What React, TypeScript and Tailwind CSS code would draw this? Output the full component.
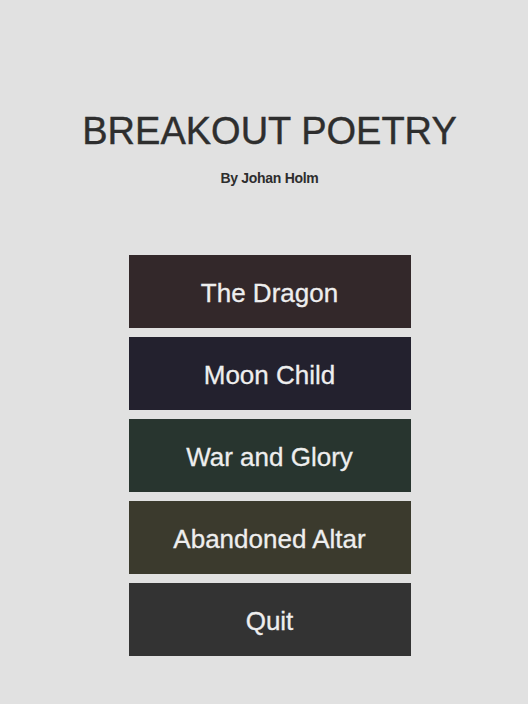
import React from 'react';

const poems = [
  { title: 'The Dragon', bg: 'bg-[#33282a]' },
  { title: 'Moon Child', bg: 'bg-[#23212e]' },
  { title: 'War and Glory', bg: 'bg-[#28352f]' },
  { title: 'Abandoned Altar', bg: 'bg-[#3b3a2d]' },
  { title: 'Quit', bg: 'bg-[#333333]' },
];

export default function App() {
  return (
    <div
      className="min-h-[704px] bg-[#e1e1e1] flex flex-col items-center pt-[112px] pl-[11px]"
      style={{ fontFamily: '"Liberation Sans", Arial, sans-serif' }}
    >
      <h1 className="text-[38px] leading-none text-[#2e2e2e] [-webkit-text-stroke:0.4px_#2e2e2e]">BREAKOUT POETRY</h1>
      <p className="mt-[21px] text-[14px] leading-none font-bold text-[#2d2d2d] tracking-[-0.3px]">By Johan Holm</p>
      <div className="mt-[70px] flex flex-col gap-[9px]">
        {poems.map(p => (
          <button
            key={p.title}
            className={`${p.bg} w-[282px] h-[73px] pt-[3px] flex items-center justify-center text-[26px] text-[#eeeeee] [-webkit-text-stroke:0.3px_#eeeeee]`}
          >
            {p.title}
          </button>
        ))}
      </div>
    </div>
  );
}
